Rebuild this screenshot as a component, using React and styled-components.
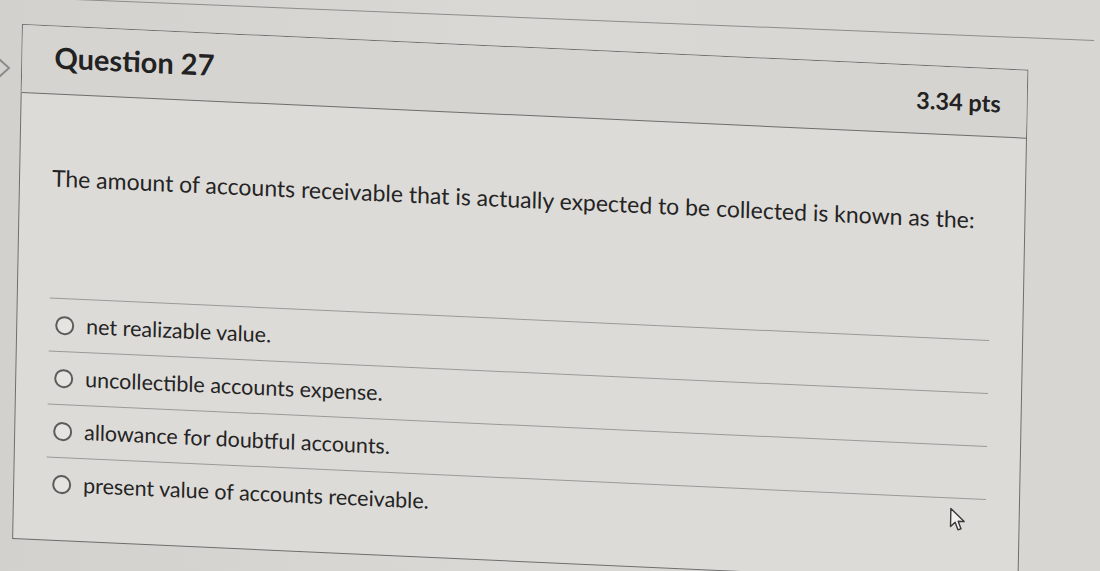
import React from "react";
import styled, { createGlobalStyle } from "styled-components";

const GlobalStyle = createGlobalStyle`
  html, body {
    margin: 0;
    padding: 0;
    background: #d7d5d2;
    font-family: Lato, "Open Sans", "Liberation Sans", sans-serif;
    color: #262626;
    overflow: hidden;
  }
`;

const Page = styled.div`
  position: relative;
  width: 1100px;
  height: 571px;
  overflow: hidden;
  background: linear-gradient(90deg, #d3d1ce 0%, #dad8d5 45%, #d8d6d3 100%);
`;

const TopRule = styled.div`
  height: 1px;
  width: 1095px;
  background: #8e8d8b;
  transform-origin: 0 0;
  transform: translateY(-4px) rotate(2.3deg);
`;

const Row = styled.div`
  display: flex;
  align-items: flex-start;
  padding-top: 23px;
`;

const Chevron = styled.div`
  width: 22px;
  padding-top: 32px;
  display: flex;
  color: #8d8c8a;
`;

const Card = styled.section`
  position: relative;
  width: 1005px;
  border: 1px solid #6f6e6c;
  background: #dddbd8;
  transform-origin: 0 0;
  transform: rotate(1.1deg) skewY(1.5deg);
`;

const Header = styled.header`
  display: flex;
  align-items: center;
  justify-content: space-between;
  height: 67px;
  padding: 0 26px 0 32px;
  background: #d6d4d1;
  border-bottom: 1px solid #6f6e6c;
`;

const Title = styled.h2`
  margin: 0;
  margin-top: -6px;
  font-size: 29px;
  font-weight: 700;
  color: #222;
`;

const Points = styled.span`
  font-size: 23.5px;
  font-weight: 700;
  color: #222;
`;

const Body = styled.div`
  padding: 68px 32px 30px 32px;
`;

const Prompt = styled.p`
  margin: 0 0 104px 0;
  font-size: 23px;
  line-height: 31px;
  color: #242424;
`;

const Answers = styled.ul`
  list-style: none;
  margin: 0;
  padding: 0;
  width: 940px;
`;

const Answer = styled.li`
  display: flex;
  align-items: center;
  gap: 12px;
  height: 52px;
  padding-left: 6px;
  border-top: ${(p) => (p.$ruled ? "1px solid #9b9a98" : "none")};
  font-size: 21.5px;
  color: #242424;
`;

const Radio = styled.span`
  width: 15px;
  height: 15px;
  border-radius: 50%;
  border: 2px solid #5d5c5a;
  background: #e6e4e1;
  flex-shrink: 0;
`;

const Pointer = styled.svg`
  position: absolute;
  right: 52px;
  bottom: 48px;
`;

const answers = [
  "net realizable value.",
  "uncollectible accounts expense.",
  "allowance for doubtful accounts.",
  "present value of accounts receivable.",
];

export default function App() {
  return (
    <Page>
      <GlobalStyle />
      <TopRule />
      <Row>
        <Chevron>
          <svg width="12" height="24" viewBox="0 0 12 24">
            <path d="M-2 2 L9 12 L-2 22" fill="none" stroke="currentColor" strokeWidth="2" />
          </svg>
        </Chevron>
        <Card>
          <Header>
            <Title>Question 27</Title>
            <Points>3.34 pts</Points>
          </Header>
          <Body>
            <Prompt>
              The amount of accounts receivable that is actually expected to be collected is known as the:
            </Prompt>
            <Answers>
              {answers.map((a, i) => (
                <Answer key={a} $ruled={i < 4}>
                  <Radio />
                  {a}
                </Answer>
              ))}
            </Answers>
          </Body>
          <Pointer width="18" height="26" viewBox="0 0 18 26">
            <path
              d="M2 2 L2 20 L6.5 15.5 L9.5 23 L12.5 21.8 L9.5 14.5 L15.5 14.5 Z"
              fill="#f2f1ef"
              stroke="#3a3a3a"
              strokeWidth="1.4"
              strokeLinejoin="round"
            />
          </Pointer>
        </Card>
      </Row>
    </Page>
  );
}
